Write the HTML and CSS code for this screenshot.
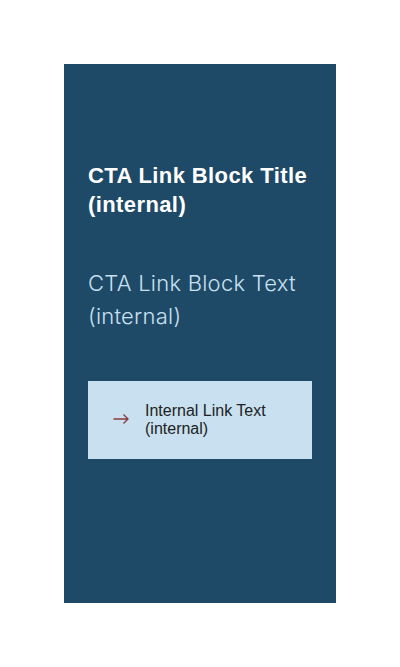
FILE: index.html
```html
<!DOCTYPE html>
<html>
<head>
<meta charset="utf-8">
<link rel="stylesheet" href="styles.css">
</head>
<body>
<div class="page">
  <div class="cta">
    <h2 class="cta-title">CTA Link Block Title (internal)</h2>
    <p class="cta-text">CTA Link Block Text (internal)</p>
    <a class="cta-link" href="#">
      <svg class="cta-arrow" width="16" height="12" viewBox="0 0 16 12" aria-hidden="true">
        <path d="M0.5 6H15M10.5 1.5L15 6L10.5 10.5" fill="none" stroke="#8b3a3a" stroke-width="1.3"/>
      </svg>
      <span class="cta-label">Internal Link Text (internal)</span>
    </a>
  </div>
</div>
</body>
</html>
```
FILE: styles.css
```css
html, body { margin: 0; padding: 0; background: #fff; }
.page { padding: 64px; }
.cta {
  width: 272px;
  height: 539px;
  box-sizing: border-box;
  background: #1e4a68;
  padding: 97px 24px 0 24px;
  display: flex;
  flex-direction: column;
}
.cta-title {
  margin: 0;
  font-family: "Liberation Sans", Arial, sans-serif;
  font-weight: 700;
  font-size: 22px;
  line-height: 29px;
  letter-spacing: 0.4px;
  color: #fff;
}
.cta-text {
  margin: 48px 0 0 0;
  font-family: Inter, "Liberation Sans", sans-serif;
  font-weight: 300;
  font-size: 22px;
  line-height: 33px;
  letter-spacing: 0.25px;
  color: #c8e0ef;
}
.cta-link {
  margin-top: 48px;
  height: 78px;
  background: #c8e0ef;
  display: flex;
  align-items: center;
  padding: 0 24px 0 25px;
  text-decoration: none;
  gap: 16px;
}
.cta-arrow {
  flex: none;
  display: block;
  margin-top: -2px;
}
.cta-label {
  font-family: "Liberation Sans", Arial, sans-serif;
  font-size: 16px;
  line-height: 18px;
  color: #222;
}
```
